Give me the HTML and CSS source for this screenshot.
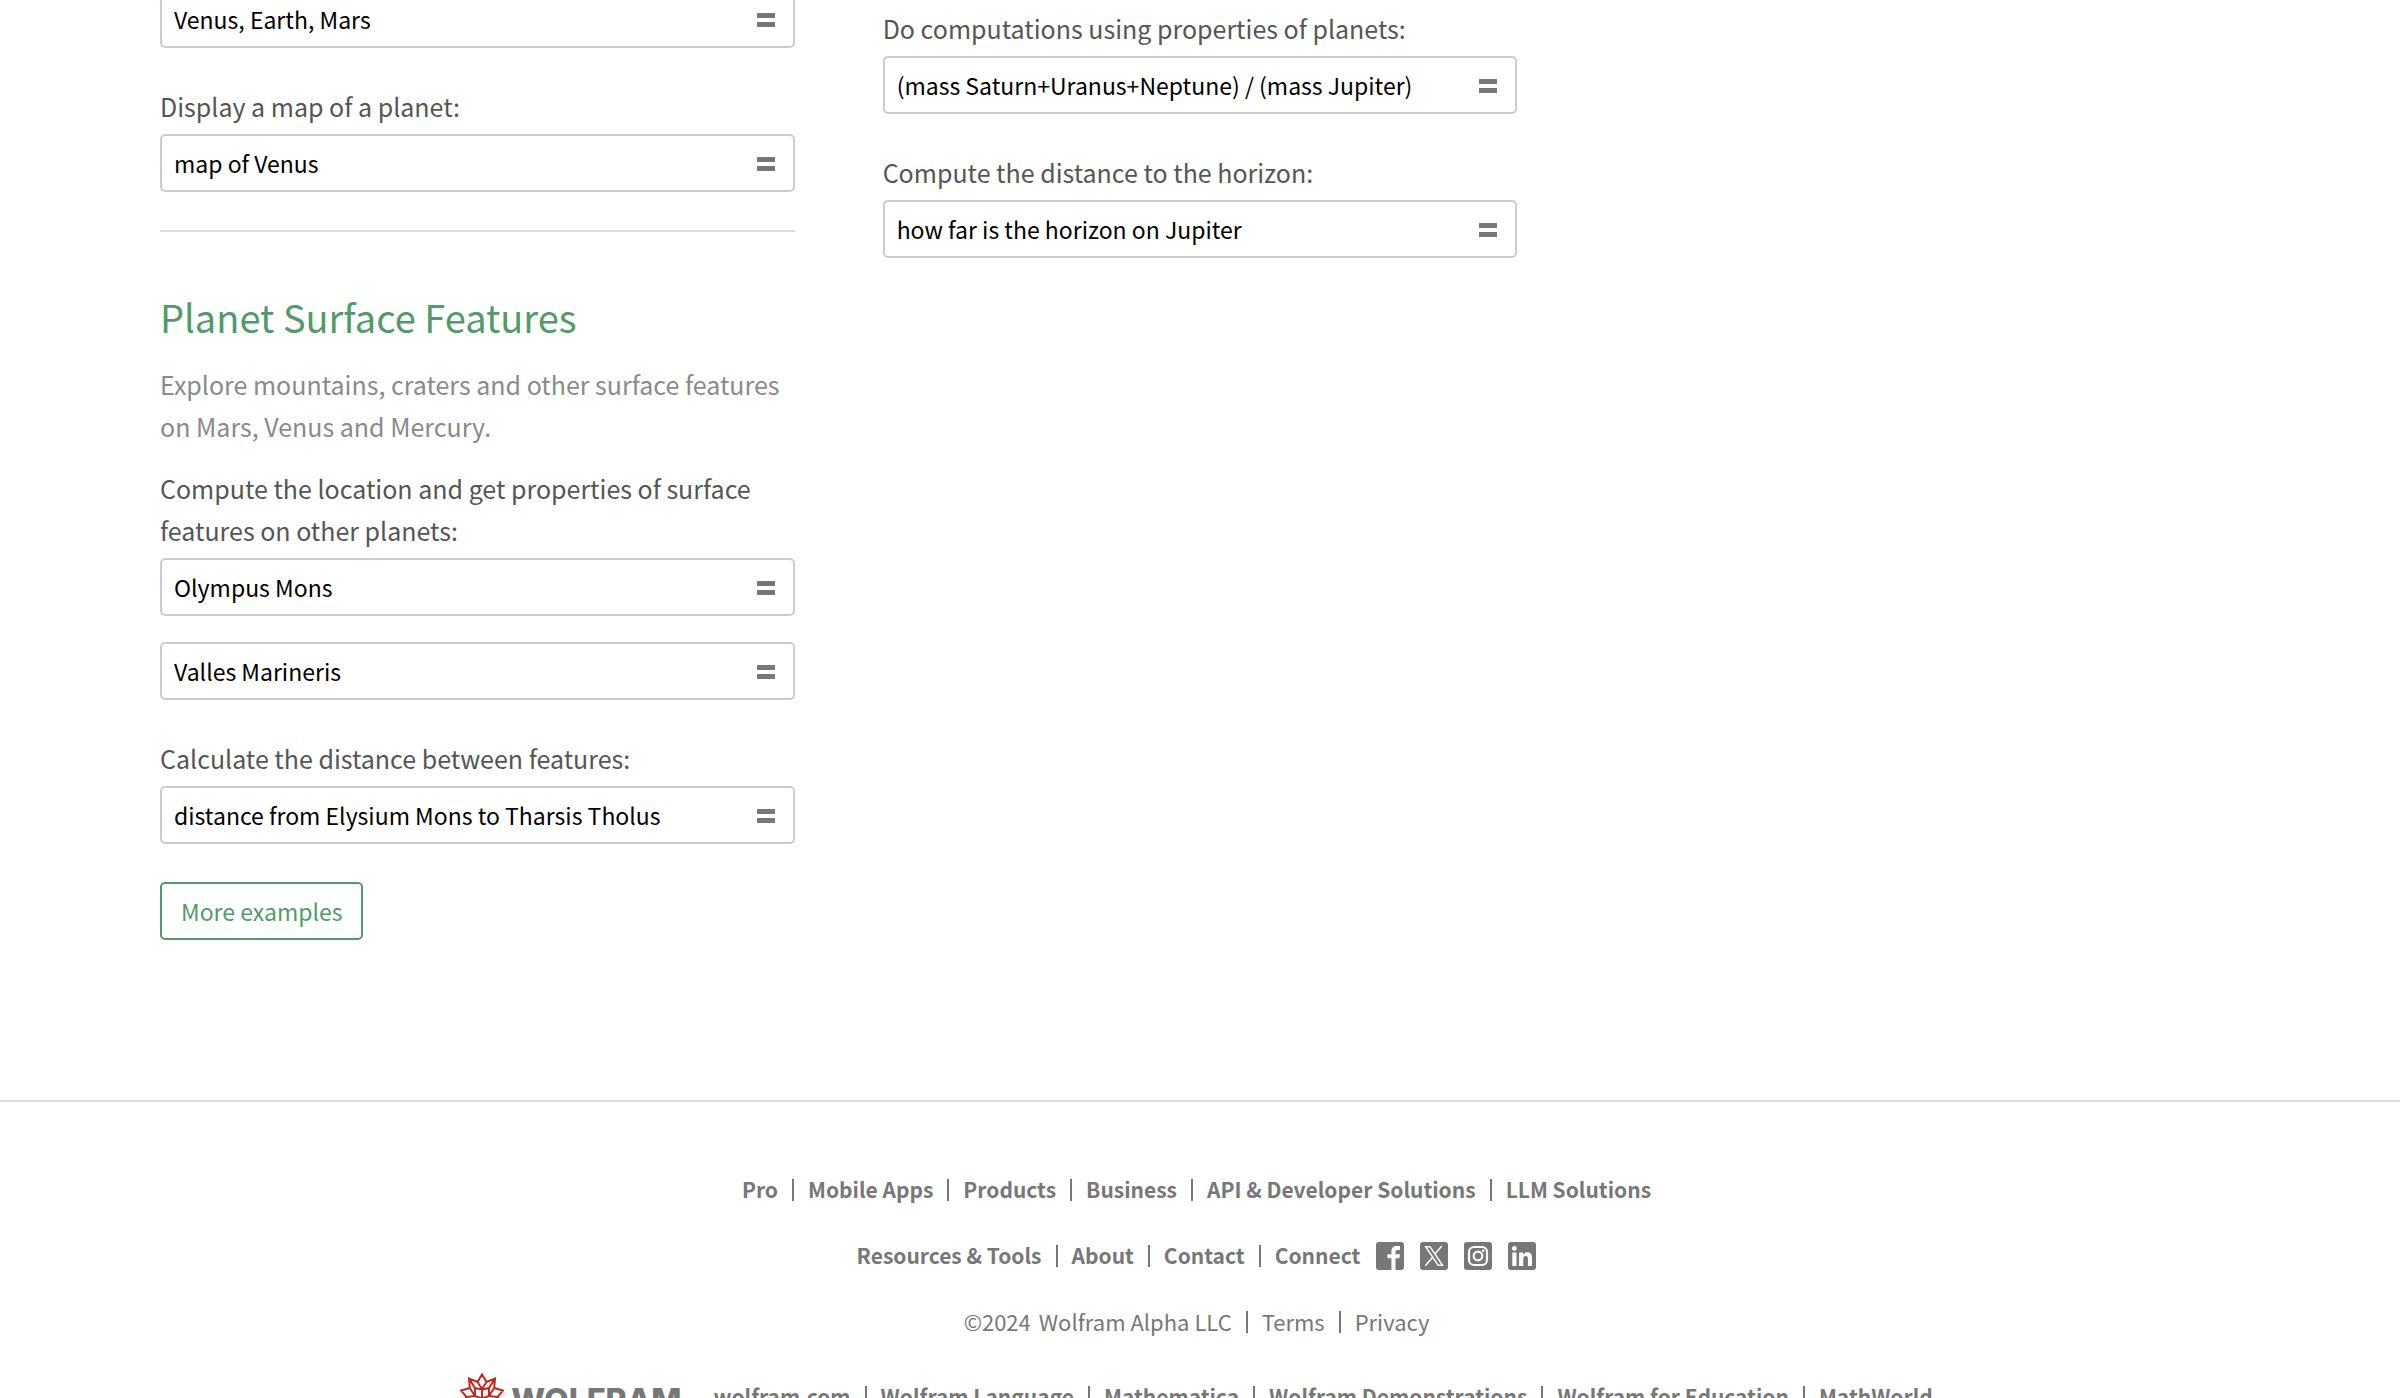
FILE: index.html
```html
<!DOCTYPE html>
<html lang="en">
<head>
<meta charset="utf-8">
<title>Planets: Wolfram|Alpha Examples</title>
<link rel="stylesheet" href="styles.css">
</head>
<body>
<main class="examples">
  <div class="column">
    <section class="topic topic-ruled">
      <form class="query">
        <input class="query-text" type="text" aria-label="Compare planets" value="Venus, Earth, Mars">
        <button class="query-go" type="button" aria-label="Compute"><span class="equals"></span></button>
      </form>
      <label class="prompt" for="q-map">Display a map of a planet:</label>
      <form class="query">
        <input class="query-text" id="q-map" type="text" value="map of Venus">
        <button class="query-go" type="button" aria-label="Compute"><span class="equals"></span></button>
      </form>
    </section>
    <section class="topic">
      <h2 class="topic-title">Planet Surface Features</h2>
      <p class="topic-intro">Explore mountains, craters and other surface features on Mars, Venus and Mercury.</p>
      <label class="prompt prompt-first" for="q-olympus">Compute the location and get properties of surface features on other planets:</label>
      <form class="query">
        <input class="query-text" id="q-olympus" type="text" value="Olympus Mons">
        <button class="query-go" type="button" aria-label="Compute"><span class="equals"></span></button>
      </form>
      <form class="query query-next">
        <input class="query-text" type="text" aria-label="Surface feature" value="Valles Marineris">
        <button class="query-go" type="button" aria-label="Compute"><span class="equals"></span></button>
      </form>
      <label class="prompt" for="q-distance">Calculate the distance between features:</label>
      <form class="query">
        <input class="query-text" id="q-distance" type="text" value="distance from Elysium Mons to Tharsis Tholus">
        <button class="query-go" type="button" aria-label="Compute"><span class="equals"></span></button>
      </form>
      <button class="more" type="button">More examples</button>
    </section>
  </div>
  <div class="column">
    <section class="topic">
      <label class="prompt prompt-top" for="q-mass">Do computations using properties of planets:</label>
      <form class="query">
        <input class="query-text" id="q-mass" type="text" value="(mass Saturn+Uranus+Neptune) / (mass Jupiter)">
        <button class="query-go" type="button" aria-label="Compute"><span class="equals"></span></button>
      </form>
      <label class="prompt" for="q-horizon">Compute the distance to the horizon:</label>
      <form class="query">
        <input class="query-text" id="q-horizon" type="text" value="how far is the horizon on Jupiter">
        <button class="query-go" type="button" aria-label="Compute"><span class="equals"></span></button>
      </form>
    </section>
  </div>
</main>
<footer class="footer">
  <nav class="row row-strong">
    <ul class="links">
      <li><a href="#">Pro</a></li>
      <li><a href="#">Mobile Apps</a></li>
      <li><a href="#">Products</a></li>
      <li><a href="#">Business</a></li>
      <li><a href="#">API &amp; Developer Solutions</a></li>
      <li><a href="#">LLM Solutions</a></li>
    </ul>
  </nav>
  <nav class="row row-strong">
    <ul class="links">
      <li><a href="#">Resources &amp; Tools</a></li>
      <li><a href="#">About</a></li>
      <li><a href="#">Contact</a></li>
      <li><a href="#">Connect</a></li>
    </ul>
    <div class="social">
      <a href="#" aria-label="Facebook"><svg viewBox="0 0 28 28"><rect width="28" height="28" rx="3"/><path class="cut" d="M15.400 28V16.300H11.400V12.200H15.400V9.500C15.400 6 17.400 4.100 20.600 4.100H24V7.900H21.800C20.100 7.900 19.500 8.700 19.500 10.200V12.200H24L23.400 16.300H19.500V28Z"/></svg></a>
      <a href="#" aria-label="X"><svg viewBox="0 0 28 28"><rect width="28" height="28" rx="3"/><path class="line" d="M5.700 4.700H10L22.500 23.300H18.200ZM21.800 4L14.800 12.200M12.800 15.100L5.400 23.800"/></svg></a>
      <a href="#" aria-label="Instagram"><svg viewBox="0 0 28 28"><rect width="28" height="28" rx="3"/><rect class="line thick" x="5" y="5" width="18" height="18" rx="5"/><circle class="line thick" cx="14" cy="14" r="4.300"/><circle class="cut" cx="19.200" cy="8.800" r="1.300"/></svg></a>
      <a href="#" aria-label="LinkedIn"><svg viewBox="0 0 28 28"><rect width="28" height="28" rx="3"/><circle class="cut" cx="6.400" cy="6.400" r="2.400"/><path class="cut" d="M4.300 10.600H8.500V24H4.300ZM11.100 10.600H15.100V12.400C16 11 17.400 10.300 19.200 10.300C23 10.300 24 12.800 24 16.300V24H19.900V17C19.900 15.300 19.700 13.900 17.700 13.900C15.700 13.900 15.300 15.400 15.300 17V24H11.100Z"/></svg></a>
    </div>
  </nav>
  <div class="row row-legal">
    <span class="copyright">©2024</span>
    <ul class="links">
      <li><a href="#">Wolfram Alpha LLC</a></li>
      <li><a href="#">Terms</a></li>
      <li><a href="#">Privacy</a></li>
    </ul>
  </div>
  <nav class="row row-strong row-brand">
    <a class="brand" href="#">
      <svg class="spikey" viewBox="0 1 44 48"><path d="M22 2.500L26.500 10L35 6.500L34.200 16L43 18.500L37.500 25L43 32L34.500 34.500L35 43.500L26.500 40L22 47L17.500 40L9 43.500L9.500 34.500L1 32L6.500 25L1 18.500L9.800 16L9 6.500L17.500 10ZM17.500 10L22 17L26.500 10M9 6.500L15 16L22 17.500L29 16L35 6.500M15 16V24L22 26.500L29 24V16M22 17V26.500M9.800 16L15 24L6.500 25M34.200 16L29 24L37.500 25"/></svg>
      <span class="wordmark">WOLFRAM</span>
    </a>
    <ul class="links">
      <li><a href="#">wolfram.com</a></li>
      <li><a href="#">Wolfram Language</a></li>
      <li><a href="#">Mathematica</a></li>
      <li><a href="#">Wolfram Demonstrations</a></li>
      <li><a href="#">Wolfram for Education</a></li>
      <li><a href="#">MathWorld</a></li>
    </ul>
  </nav>
</footer>
</body>
</html>
```
FILE: styles.css
```css
* { box-sizing: border-box; }

body {
  margin: 0;
  height: 100vh;
  overflow: hidden;
  background: #fff;
  color: #555;
  font: 25px/42px "Noto Sans CJK SC", "Noto Sans", sans-serif;
}

a { color: inherit; text-decoration: none; }

.examples {
  display: grid;
  grid-template-columns: repeat(3, 1fr);
  gap: 88px;
  margin-top: -10px;
  padding: 0 160px 160px;
}

.topic { display: flow-root; }

.topic-ruled {
  padding-bottom: 38px;
  border-bottom: 2px solid #ddd;
}

.topic-title {
  margin: 57px 0 0;
  color: #529a69;
  font-size: 38px;
  font-weight: 400;
  line-height: 56px;
}

.topic-intro {
  margin: 18px 0 0;
  color: #8a8a8a;
}

.prompt {
  display: block;
  padding: 37px 0 7px;
}

.prompt-first { padding-top: 20px; }
.prompt-top { padding-top: 17px; }

.query {
  display: flex;
  align-items: center;
  height: 58px;
  border: 2px solid #ccc;
  border-radius: 5px;
}

.query-next { margin-top: 26px; }

.query-text {
  flex: 1;
  min-width: 0;
  height: 54px;
  padding: 0 0 0 12px;
  border: 0;
  outline: 0;
  background: none;
  color: #000;
  font: inherit;
  font-size: 23px;
}

.query-go {
  display: flex;
  padding: 20px 18px 18px;
  border: 0;
  background: none;
}

.equals {
  width: 18px;
  height: 14px;
  border: solid #777;
  border-width: 5px 0;
}

.more {
  display: block;
  height: 58px;
  margin-top: 38px;
  padding: 0 19px;
  border: 2px solid #529a69;
  border-radius: 5px;
  background: none;
  color: #529a69;
  font: inherit;
  font-size: 23px;
}

.footer {
  display: flex;
  flex-direction: column;
  gap: 24px;
  padding: 67px 7px 0 0;
  border-top: 2px solid #ddd;
  color: #777;
  font-size: 21px;
}

.row {
  display: flex;
  justify-content: center;
  align-items: center;
  height: 42px;
}

.row-strong { font-weight: 700; }

.row-legal { font-size: 22px; }

.row-brand { margin-top: 9px; }

.links {
  display: flex;
  align-items: center;
  margin: 0;
  padding: 0;
  list-style: none;
}

.links li {
  display: flex;
  align-items: center;
}

.links a,
.copyright { padding-bottom: 2px; }

.links li + li::before {
  content: "";
  width: 2px;
  height: 22px;
  margin: 0 14px;
  background: #777;
}

.social {
  display: flex;
  gap: 16px;
  margin-left: 16px;
}

.social svg { display: block; width: 28px; height: 28px; fill: #777; }
.social .cut { fill: #fff; }
.social .line { fill: none; stroke: #fff; stroke-width: 1.500; }
.social .thick { stroke-width: 2.200; }

.copyright { margin-right: 8px; }

.brand {
  display: flex;
  align-items: center;
  gap: 7px;
  margin-right: 32px;
}

.spikey {
  width: 44px;
  height: 48px;
  fill: none;
  stroke: #c0281c;
  stroke-width: 2;
}

.wordmark {
  padding-top: 8px;
  font-family: Inter, "Liberation Sans", sans-serif;
  font-size: 32px;
  font-weight: 800;
}
```
